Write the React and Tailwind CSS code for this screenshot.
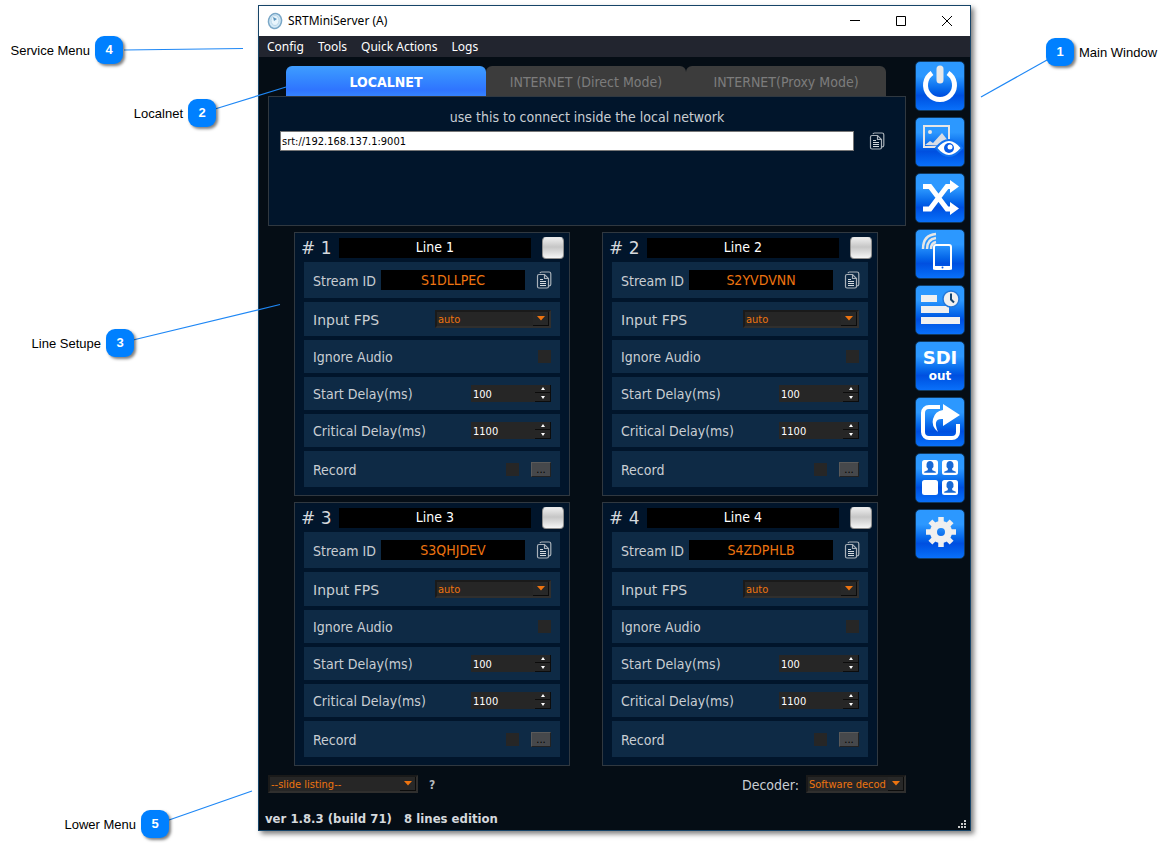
import React, { useState } from 'react'

const tabs = ['LOCALNET', 'INTERNET (Direct Mode)', 'INTERNET(Proxy Mode)']

const lines = [
  { id: 1, name: 'Line 1', stream: 'S1DLLPEC' },
  { id: 2, name: 'Line 2', stream: 'S2YVDVNN' },
  { id: 3, name: 'Line 3', stream: 'S3QHJDEV' },
  { id: 4, name: 'Line 4', stream: 'S4ZDPHLB' },
]

// label boxes around the window, hung on its left or right edge
const callouts = [
  { no: 4, label: 'Service Menu', place: 'right-full mr-[135px] top-[31px]' },
  { no: 2, label: 'Localnet', place: 'right-full mr-[42px] top-[94px]' },
  { no: 3, label: 'Line Setupe', place: 'right-full mr-[124px] top-[324px]' },
  { no: 5, label: 'Lower Menu', place: 'right-full mr-[89px] top-[805px]' },
  { no: 1, label: 'Main Window', place: 'left-full ml-[75px] top-[33px] flex-row-reverse' },
]

const rowClass = 'flex items-center bg-[#0e2a45] px-[9px] text-[14px] text-[#c9ced3]'
const tahoma = "font-['DejaVu_Sans_Condensed','DejaVu_Sans',sans-serif]"

function CopyIcon() {
  return (
    <svg width="16" height="18" viewBox="0 0 16 18" fill="none" stroke="#a9b1b9" strokeWidth="1.2">
      <path d="M4 2.200Q4.200 1 5.500 1h7.500q1.800 0 1.800 1.800v10.400q0 1.600-1.800 1.800" />
      <path d="M3 3.500h5.500l4 4v8q0 1.500-1.500 1.500H3q-1.500 0-1.500-1.500V5q0-1.500 1.500-1.500z" />
      <path d="M8.500 3.500v4h4" />
      <path d="M4 8.500h3M4 10.500h6M4 12.500h6M4 14.500h6" stroke="#d3d8dc" />
    </svg>
  )
}

function DropDown({ label, value, className }) {
  return (
    <div className={`relative h-[18px] ${className}`}>
      <select
        aria-label={label}
        className="block h-[18px] w-full appearance-none overflow-hidden border-2 border-[#1a1a1a] border-b-[#302f2e] border-r-[#302f2e] bg-[#262626] pl-px pr-[18px] pt-px text-[11px] leading-[14px] text-[#ee7410] outline-none"
      >
        <option>{value}</option>
      </select>
      <span className="pointer-events-none absolute right-[2px] top-[2px] flex h-[14px] w-4 items-center justify-center border-b border-r border-[#0c0c0c] bg-[#282828]">
        <svg width="8" height="5" viewBox="0 0 8 5">
          <path d="M0 0h8L4 4.500z" fill="#ee7410" />
        </svg>
      </span>
    </div>
  )
}

function SpinBox({ id, start }) {
  const [value, setValue] = useState(start)

  return (
    <div className="flex h-[17px] w-20 bg-[#262626]">
      <input
        id={id}
        type="number"
        value={value}
        onChange={(e) => setValue(Number(e.target.value))}
        className="h-[17px] w-16 bg-transparent pl-[2px] pt-px text-[11px] leading-4 text-white outline-none [appearance:textfield]"
      />
      <div className="flex w-4 flex-col border-r border-[#0c0c0c]">
        <button type="button" aria-label="Increase" onClick={() => setValue(value + 10)} className="flex h-2 items-center justify-center border-b border-[#0c0c0c]">
          <svg width="4" height="3" viewBox="0 0 4 3"><path d="M2 0l2 3H0z" fill="#fff" /></svg>
        </button>
        <button type="button" aria-label="Decrease" onClick={() => setValue(value - 10)} className="flex h-[9px] items-center justify-center border-b border-[#0c0c0c]">
          <svg width="4" height="3" viewBox="0 0 4 3"><path d="M2 3l2-3H0z" fill="#fff" /></svg>
        </button>
      </div>
    </div>
  )
}

function LineCard({ line }) {
  const { id, name, stream } = line
  const box = 'size-[13px] appearance-none bg-[#262626] checked:bg-[#ee7410]'

  return (
    <section className="border border-[#303840] bg-[#01152b] px-[9px] pb-2">
      <div className="flex h-[29px] items-center">
        <h2 className="-ml-[3px] w-[38px] whitespace-pre font-['DejaVu_Sans',sans-serif] text-[17px] leading-5 text-[#d5d9dd]">{`# ${id}`}</h2>
        <input
          aria-label={`Name of line ${id}`}
          defaultValue={name}
          className="h-5 w-0 flex-1 bg-black text-center text-[14px] text-white outline-none"
        />
        <button
          type="button"
          aria-label={`Preview ${name}`}
          className="-mr-1 ml-[11px] size-[22px] rounded-[4px] border border-[#8f8f8f] border-t-[#e8e8e8] bg-linear-to-b from-[#ededed] via-[#c6c6c6] via-45% to-[#f6f6f6]"
        ></button>
      </div>

      <div className="flex flex-col gap-1">
        <div className={`${rowClass} h-9`}>
          <label htmlFor={`stream-${id}`} className="w-[68px] whitespace-nowrap pt-[2px]">Stream ID</label>
          <input
            id={`stream-${id}`}
            readOnly
            value={stream}
            className="h-5 w-0 flex-1 bg-black text-center text-[14px] text-[#ee7410] outline-none"
          />
          <button type="button" aria-label="Copy stream ID" className="-mr-px ml-[11px]"><CopyIcon /></button>
        </div>
        <div className={`${rowClass} h-[34px] justify-between`}>
          <span className="pt-[2px] font-['DejaVu_Sans',sans-serif]">Input FPS</span>
          <DropDown label="Input FPS" value="auto" className="w-[116px]" />
        </div>
        <div className={`${rowClass} h-[33px] justify-between`}>
          <label htmlFor={`ignore-${id}`} className="pt-[2px]">Ignore Audio</label>
          <input id={`ignore-${id}`} type="checkbox" className={box} />
        </div>
        <div className={`${rowClass} h-[33px] justify-between`}>
          <label htmlFor={`start-${id}`} className="pt-[2px]">Start Delay(ms)</label>
          <SpinBox id={`start-${id}`} start={100} />
        </div>
        <div className={`${rowClass} h-[33px] justify-between`}>
          <label htmlFor={`critical-${id}`} className="pt-[2px]">Critical Delay(ms)</label>
          <SpinBox id={`critical-${id}`} start={1100} />
        </div>
        <div className={`${rowClass} h-9`}>
          <label htmlFor={`record-${id}`} className="flex-1 pt-[2px]">Record</label>
          <input id={`record-${id}`} type="checkbox" className={box} />
          <button
            type="button"
            aria-label="Record folder"
            className="ml-3 h-[15px] w-5 border border-[#5a5a5a] border-b-[#222] border-r-[#222] bg-[#46484b] text-[11px] leading-[11px] text-black"
          >
            ...
          </button>
        </div>
      </div>
    </section>
  )
}

const person = 'a3.800 4.300 0 0 1 2 7.800l.4 1.400 3.400 1.500v1h-11.600v-1l3.400-1.500.4-1.400a3.800 4.300 0 0 1 2-7.800z'

const sideButtons = [
  {
    label: 'Power',
    icon: (
      <>
        <path d="M17 12A14.500 14.500 0 1 0 33 12" fill="none" stroke="#fff" strokeWidth="5" />
        <rect x="21.500" y="4.500" width="7" height="18" rx="3.500" fill="#e8e8e8" />
      </>
    ),
  },
  {
    label: 'Preview',
    icon: (
      <>
        <rect x="9" y="9" width="25" height="21" fill="none" stroke="#e6e6e6" strokeWidth="2" />
        <circle cx="15" cy="15" r="2" fill="#e6e6e6" />
        <path d="M10 28l5-4 3 2 9-10 7 9v4z" fill="#d8dde4" />
        <path d="M21 31q13-16 26 0q-13 16-26 0z" fill="#fff" stroke="#1273f0" strokeWidth="2" />
        <circle cx="34" cy="31" r="5" fill="#075be6" />
        <circle cx="35" cy="30" r="2.500" fill="#fff" />
      </>
    ),
  },
  {
    label: 'Shuffle',
    icon: (
      <>
        <path d="M8 13.500h7l17 22.500h5M8 36h7l17-22.500h5" fill="none" stroke="#fff" strokeWidth="5" />
        <path d="M35 7l9 6.500-9 6.500zM35 29l9 6.500-9 6.500z" fill="#fff" />
      </>
    ),
  },
  {
    label: 'Mobile',
    icon: (
      <>
        <rect x="19" y="16" width="17" height="24" rx="2" fill="none" stroke="#fff" strokeWidth="2" />
        <path d="M18 37h19v3.500H18z" fill="#fff" />
        <circle cx="27.500" cy="38.500" r="1" fill="#075be6" />
        <path d="M8 20Q8 6 21 5M12 20Q12 10 21 9M16 20Q16 14 21 13" fill="none" stroke="#e6e6e6" strokeWidth="2.500" />
      </>
    ),
  },
  {
    label: 'Schedule',
    icon: (
      <>
        <path d="M6 10h16v7H6zM6 21h28v7H6zM6 32h39v7H6z" fill="#f0f0f0" />
        <circle cx="36" cy="14" r="8" fill="#f0f0f0" stroke="#2277d8" strokeWidth="1.500" />
        <path d="M36 8.500v6l3 3" fill="none" stroke="#17456f" strokeWidth="2" />
      </>
    ),
  },
  { label: 'SDI out' },
  {
    label: 'Share',
    icon: (
      <>
        <path d="M25 10H14a6 6 0 0 0-6 6v19a6 6 0 0 0 6 6h23a6 6 0 0 0 6-6v-8" fill="none" stroke="#fff" strokeWidth="4" />
        <path d="M28 7l17 11-17 11v-7q-11-1-5 13-7-6-5-13 2-8 10-9z" fill="#fff" />
      </>
    ),
  },
  {
    label: 'Guests',
    icon: (
      <>
        <rect x="7" y="7" width="16" height="15" rx="2.500" fill="#fff" />
        <rect x="27" y="7" width="16" height="15" rx="2.500" fill="#fff" />
        <rect x="7" y="27" width="16" height="15" rx="2.500" fill="#fff" />
        <rect x="27" y="27" width="16" height="15" rx="2.500" fill="#fff" />
        <path d={`M15 8${person}M35 8${person}M35 28${person}`} fill="#1768d4" />
      </>
    ),
  },
  {
    label: 'Settings',
    icon: (
      <>
        <circle cx="26" cy="23" r="7.500" fill="none" stroke="#efefef" strokeWidth="7" />
        <path d="M26 8v5M26 33v5M11 23h5M36 23h5M15.400 12.400l3.500 3.500M33.100 30.100l3.500 3.500M15.400 33.600l3.500-3.500M33.100 15.900l3.500-3.500" stroke="#efefef" strokeWidth="5.500" />
      </>
    ),
  },
]

function App() {
  const [activeTab, setActiveTab] = useState(0)

  return (
    <div className={`grid grid-cols-[258fr_713fr_202fr] bg-white pb-[18px] pt-[5px] ${tahoma}`}>
      <main className="relative col-start-2">
        <div className="border border-[#164468] bg-[#050d15] shadow-[3px_3px_5px_rgba(0,0,0,0.5)]">
          {/* Title bar */}
          <header className="flex h-[30px] items-center bg-white pl-2 font-['Noto_Sans',sans-serif] text-[12px] text-black">
            <svg width="16" height="18" viewBox="0 0 16 18">
              <ellipse cx="8" cy="9" rx="6.500" ry="7.500" fill="#d4e9f6" stroke="#7aa7c7" strokeWidth="1.500" transform="rotate(15 8 9)" />
              <ellipse cx="8" cy="8.500" rx="4" ry="5" fill="#e9f5fc" stroke="#b8d5e8" />
              <path d="M6 5l4 2-3 2z" fill="#5b94bd" />
            </svg>
            <h1 className="flex-1 pl-[5px]">SRTMiniServer (A)</h1>
            <button type="button" aria-label="Minimize" className="flex h-full w-[46px] items-center justify-center">
              <svg width="10" height="10" viewBox="0 0 10 10" stroke="#000"><path d="M0 4.500h10" /></svg>
            </button>
            <button type="button" aria-label="Maximize" className="flex h-full w-[46px] items-center justify-center">
              <svg width="10" height="10" viewBox="0 0 10 10" stroke="#000" fill="none"><path d="M.5.5h9v9h-9z" /></svg>
            </button>
            <button type="button" aria-label="Close" className="flex h-full w-[46px] items-center justify-center">
              <svg width="10" height="10" viewBox="0 0 10 10" stroke="#000"><path d="M0 0l10 10M10 0L0 10" /></svg>
            </button>
          </header>

          <nav className="flex h-[21px] items-center gap-[14px] bg-[#22252f] pl-2 font-['Noto_Sans',sans-serif] text-[12px] text-white">
            <button type="button">Config</button>
            <button type="button">Tools</button>
            <button type="button">Quick Actions</button>
            <button type="button">Logs</button>
          </nav>

          <div className="flex gap-[9px] pl-[9px] pr-[5px]">
            <div className="min-w-0 flex-1 pt-[9px]">
              <div className="ml-[18px] mr-5 grid grid-cols-3">
                {tabs.map((tab, index) => (
                  <button
                    key={tab}
                    type="button"
                    onClick={() => setActiveTab(index)}
                    className={`h-[30px] whitespace-nowrap rounded-t-[6px] pt-[3px] text-[14px] ${activeTab === index ? 'bg-linear-to-b from-[#3f9dff] via-[#2f74ff] via-80% to-[#3683ff] font-bold text-white' : 'bg-[#3c3c3c] text-[#7c7c7c]'}`}
                  >
                    {tab}
                  </button>
                ))}
              </div>

              <section className="h-[130px] border border-[#303840] bg-[#01152b] px-[11px] pt-[10px]">
                <p className="text-center text-[14px] leading-5 text-[#c9ced3]">use this to connect inside the local network</p>
                <div className="mt-1 flex items-center">
                  <input
                    aria-label="Server address"
                    readOnly
                    value="srt://192.168.137.1:9001"
                    className="h-5 min-w-0 flex-1 border border-[#777] bg-white pl-px pt-px text-[11px] text-black outline-none"
                  />
                  <button type="button" aria-label="Copy address" className="ml-[15px] mr-[9px]"><CopyIcon /></button>
                </div>
              </section>

              <div className="ml-[26px] mr-7 mt-[6px] grid grid-cols-2 gap-x-8 gap-y-[6px]">
                {lines.map((line) => (
                  <LineCard key={line.id} line={line} />
                ))}
              </div>

              <div className="mt-[9px] flex h-[18px] items-center">
                <DropDown label="Slide" value="--slide listing--" className="w-[150px]" />
                <button type="button" className="ml-[11px] flex-1 pt-[2px] text-left text-[12px] font-bold text-[#b5b8bb]">?</button>
                <span className="mr-[7px] pt-[2px] text-[14px] text-[#c9ced3]">Decoder:</span>
                <DropDown label="Decoder" value="Software decod" className="w-[100px]" />
              </div>
            </div>

            {/* Right side buttons */}
            <aside className="flex flex-col gap-[6px] pt-1">
              {sideButtons.map(({ label, icon }) => (
                <button
                  key={label}
                  type="button"
                  aria-label={label}
                  className="size-[50px] rounded-[5px] border border-[#103a63] bg-linear-to-b from-[#2c98ff] from-30% via-[#004fe0] via-70% to-[#0a70fa] text-center font-['DejaVu_Sans',sans-serif] font-bold text-white"
                >
                  {icon ? (
                    <svg viewBox="1 1 48 48" className="size-12">{icon}</svg>
                  ) : (
                    <>
                      <span className="block text-[18px] leading-5">SDI</span>
                      <span className="block text-[12px] leading-4">out</span>
                    </>
                  )}
                </button>
              ))}
            </aside>
          </div>

          <footer className="flex h-[37px] items-end pl-[6px]">
            <p className="flex-1 whitespace-pre pb-px text-[13px] font-bold leading-5 text-[#d5d9dd]">ver 1.8.3 (build 71)   8 lines edition</p>
            <svg width="12" height="12" viewBox="0 0 12 12">
              <path d="M6 2h2v2H6zM3 5h2v2H3zM6 5h2v2H6zM0 8h2v2H0zM3 8h2v2H3zM6 8h2v2H6z" fill="#c8c8c8" />
            </svg>
          </footer>
        </div>

        {/* Callouts */}
        <svg className="pointer-events-none absolute left-0 top-0 size-px overflow-visible" stroke="#1e87f5" strokeWidth="1.2">
          <path d="M-134 45L-15 43.500M-43 104L28 82M-125 335L22 299.500M-89 815L-6 786" />
        </svg>
        <svg className="pointer-events-none absolute left-full top-0 size-px overflow-visible" stroke="#1e87f5" strokeWidth="1.2">
          <path d="M76 55L10 92" />
        </svg>
        {callouts.map(({ no, label, place }) => (
          <div key={no} className={`absolute flex h-7 items-center gap-[5px] whitespace-nowrap font-['Liberation_Sans',sans-serif] text-[13px] text-black ${place}`}>
            <span className="pt-[2px]">{label}</span>
            <span className="flex size-7 items-center justify-center rounded-[9px] bg-[#0080ff] font-bold text-white shadow-[2px_2px_3px_rgba(0,0,0,0.5)]">{no}</span>
          </div>
        ))}
      </main>
    </div>
  )
}

export default App
